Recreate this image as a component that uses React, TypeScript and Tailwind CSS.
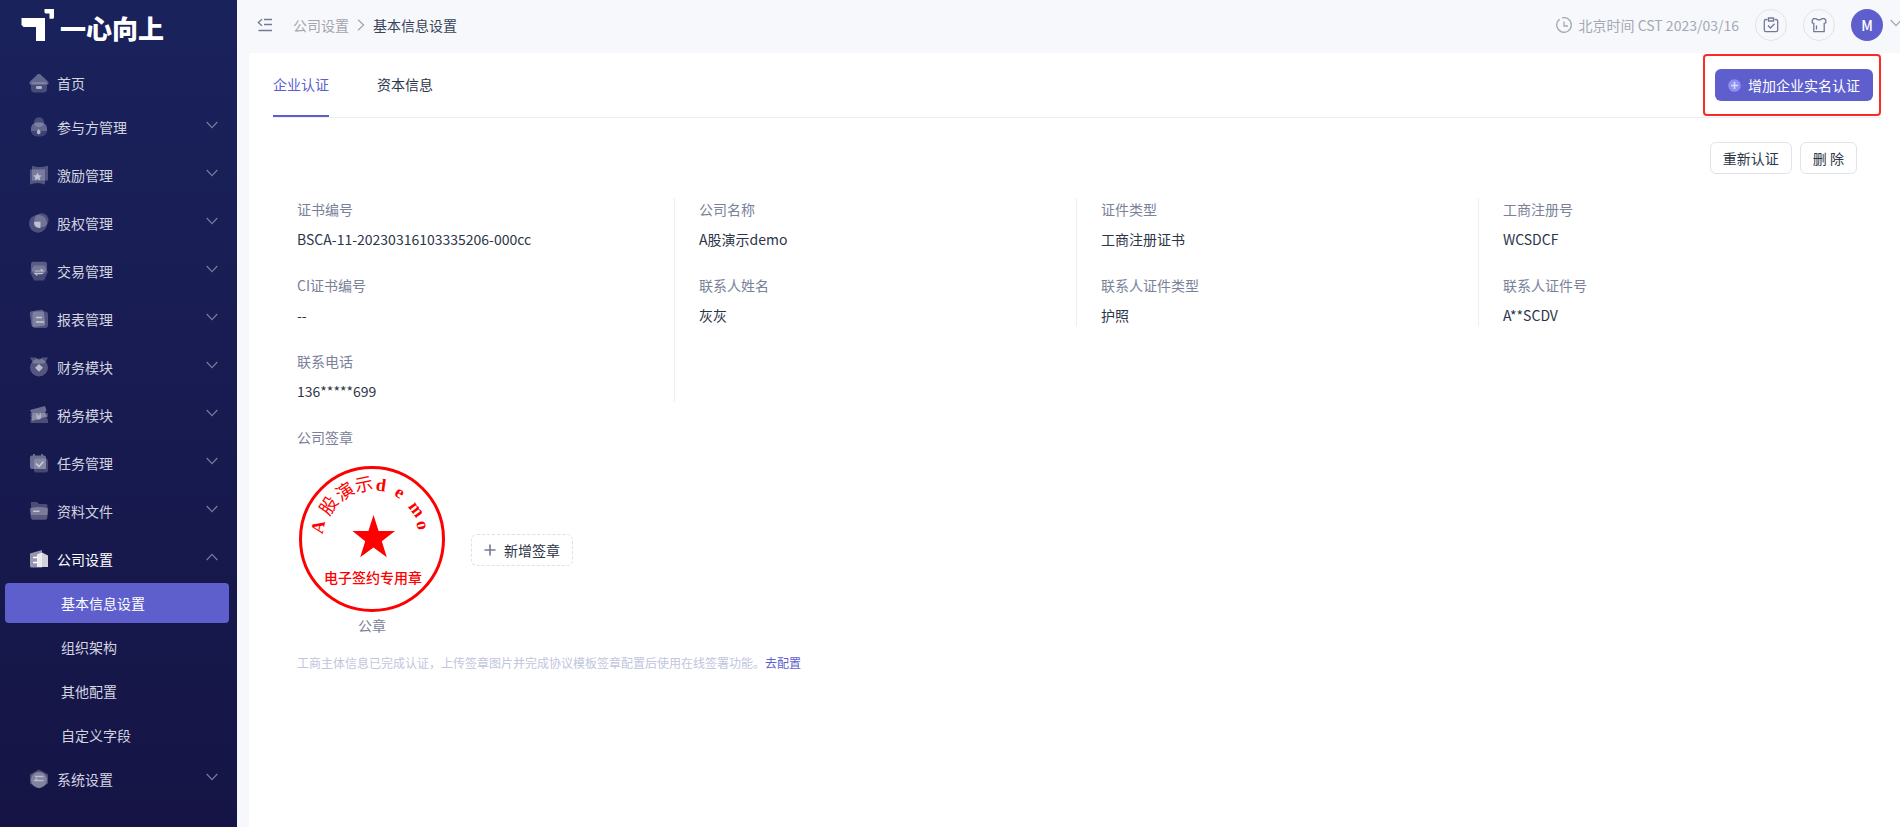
import { useState } from "react";
import type { ReactNode } from "react";
import clsx from "clsx";

const Chevron = ({ className }: { className?: string }) => (
  <svg
    className={clsx("h-2 w-3 shrink-0", className)}
    viewBox="0 0 12 8"
    fill="none"
    stroke="currentColor"
    strokeWidth="1.3"
  >
    <path d="M0.7 1 6 6.6 11.3 1" />
  </svg>
);

const icons: Record<string, ReactNode> = {
  home: (
    <>
      <rect x="2" y="9" width="16" height="10.5" rx="3.5" opacity="0.25" />
      <path d="M8.7 1.2a2 2 0 0 1 2.6 0l7.9 7.6c.7.8.3 2.7-.8 2.7H1.6c-1.1 0-1.5-1.9-.8-2.7z" opacity="0.4" />
      <rect x="7" y="13" width="6" height="3" rx="1.2" opacity="0.75" />
    </>
  ),
  party: (
    <>
      <circle cx="10" cy="5.2" r="5" opacity="0.25" />
      <rect x="2" y="5.5" width="16" height="14" rx="6" opacity="0.2" />
      <path d="M2 14v-2.5a6 6 0 0 1 6-6h4a6 6 0 0 1 6 6V14z" opacity="0.25" />
      <path d="M9.7 11.7 11.4 14.5a1.9 1.9 0 1 1-3.4 0z" opacity="0.8" />
    </>
  ),
  incentive: (
    <>
      <path d="M3 .8q7.5 2.4 16 0V15.5H3z" opacity="0.3" />
      <path d="M1 4.5h15V19.5q-7.5-3-15 0z" opacity="0.3" />
      <path d="m8.500 7.500 1.300 2.700 2.900.4-2.100 2 .5 2.900-2.600-1.400-2.600 1.400.5-2.900-2.100-2 2.900-.4z" opacity="0.8" />
    </>
  ),
  equity: (
    <>
      <circle cx="12.5" cy="7.3" r="7" opacity="0.28" />
      <circle cx="9" cy="10.7" r="9" opacity="0.28" />
      <path d="M5 8.7h6.5V15H9.8A4.8 4.8 0 0 1 5 10.2z" opacity="0.8" />
    </>
  ),
  trade: (
    <>
      <path d="M2 3Q2 .8 4 .8h12q2 0 2 2.2V8q-1 5-8 6Q3 13 2 8z" opacity="0.35" />
      <path d="M5 4.5h10l4 6.5-4 8.5H5L1 11z" opacity="0.25" />
      <path d="M6 10h8l-2.3-2M14 12.5H6l2.3 2" fill="none" stroke="currentColor" strokeWidth="1.1" opacity="0.8" />
    </>
  ),
  report: (
    <>
      <rect x="1.5" y="1.5" width="14" height="16" rx="2" transform="rotate(-8 8 9)" opacity="0.35" />
      <rect x="3.5" y="2.5" width="15.5" height="16.5" rx="3" opacity="0.3" />
      <path d="M7 8.5h6M7 13h8" stroke="currentColor" strokeWidth="1.5" opacity="0.85" />
    </>
  ),
  finance: (
    <>
      <path d="M1 .5h6l3 3 3-3h6l-3.5 6h-11z" opacity="0.3" />
      <circle cx="10" cy="10.5" r="9" opacity="0.32" />
      <path d="m10 7 4 3.700-4 4-4-4z" opacity="0.8" />
    </>
  ),
  tax: (
    <>
      <path d="M1 5 16 1l1.5 4.5-1.5 2 2 4L3 16l-.5-4 1-2.5z" opacity="0.45" />
      <path d="M1.5 8H19v3.5q-2 1.500 0 3V18H1.500v-3.500q2-1.500 0-3z" opacity="0.28" />
      <path d="M7.5 7.5 9.8 11l2.200-3.500v6l-2.200 1.500-2.300-1.500z" opacity="0.55" />
    </>
  ),
  task: (
    <>
      <rect x="5" y="5.5" width="14" height="14" rx="2" opacity="0.25" />
      <path d="M1 4.5Q1 2.500 3 2.500h1V1h2v1.500h6V1h2v1.500h1q2 0 2 2V16H3q-2 0-2-2z" opacity="0.45" />
      <path d="m7 10.5 3 3L14.5 8.5" fill="none" stroke="currentColor" strokeWidth="1.7" opacity="0.85" />
    </>
  ),
  file: (
    <>
      <path d="M2 1h6l2 2h7q1.5 0 1.5 1.5V14H2z" opacity="0.28" />
      <path d="M2 7q7-2 16 0 1.500 0 1.200 2l-1 8q-.2 1.800-2 1.800H4q-1.800 0-2-1.800L.8 9Q.5 7 2 7z" opacity="0.35" />
      <path d="M4 10.3h6.5" stroke="currentColor" strokeWidth="1.5" opacity="0.85" />
    </>
  ),
  company: (
    <>
      <path d="M1 4.5 13 1v17.5H2.5Q1 18.500 1 17z" opacity="0.55" />
      <path d="M8 5.5 13 3.500l6 3V18H8z" opacity="0.8" />
      <path d="M4 8.5h5M4 13.5h5" stroke="currentColor" strokeWidth="1.5" />
    </>
  ),
  system: (
    <>
      <path d="m10 .5 9 5v9l-9 5-9-5v-9z" opacity="0.3" />
      <circle cx="10" cy="11" r="8" opacity="0.4" />
      <path d="M6 7.5h8.5M14.5 11.500H6l2-2" fill="none" stroke="currentColor" strokeWidth="1.3" opacity="0.7" />
    </>
  ),
};

const menus = [
  { key: "party", title: "参与方管理" },
  { key: "incentive", title: "激励管理" },
  { key: "equity", title: "股权管理" },
  { key: "trade", title: "交易管理" },
  { key: "report", title: "报表管理" },
  { key: "finance", title: "财务模块" },
  { key: "tax", title: "税务模块" },
  { key: "task", title: "任务管理" },
  { key: "file", title: "资料文件" },
  {
    key: "company",
    title: "公司设置",
    children: ["基本信息设置", "组织架构", "其他配置", "自定义字段"],
  },
  { key: "system", title: "系统设置" },
];

const columns = [
  [
    ["证书编号", "BSCA-11-20230316103335206-000cc"],
    ["CI证书编号", "--"],
    ["联系电话", "136*****699"],
  ],
  [
    ["公司名称", "A股演示demo"],
    ["联系人姓名", "灰灰"],
  ],
  [
    ["证件类型", "工商注册证书"],
    ["联系人证件类型", "护照"],
  ],
  [
    ["工商注册号", "WCSDCF"],
    ["联系人证件号", "A**SCDV"],
  ],
];

const MenuIcon = ({ name }: { name: string }) => (
  <svg className="size-5 shrink-0" viewBox="0 0 20 20" fill="currentColor">
    {icons[name]}
  </svg>
);

const Sidebar = () => {
  const [opened, setOpened] = useState("company");
  const [current, setCurrent] = useState("基本信息设置");

  return (
    <aside className="w-[237px] shrink-0 bg-linear-to-b from-[#1a225c] to-[#151445] text-[#d3d4e0]">
      <div className="flex h-[63px] items-start gap-1 pt-2 pl-5">
        <svg className="h-9 w-9 shrink-0 text-white" viewBox="0 0 36 36" fill="currentColor">
          <path d="M1.5 10H25v23h-9V19H3.5l-2-2z" />
          <path d="M24.5 1H34v9l-1 .8h-3.5V5.5h-4l-1-1z" />
        </svg>
        <span className="text-[26px] leading-10 font-black text-white">一心向上</span>
      </div>
      <nav className="pb-7">
        <a href="#" className="flex h-10 items-center gap-2 pl-[29px]">
          <MenuIcon name="home" />
          首页
        </a>
        {menus.map((menu) => {
          const isOpen = opened === menu.key;
          return (
            <div key={menu.key} className="flow-root">
              <button
                onClick={() => setOpened(isOpen ? "" : menu.key)}
                className={clsx(
                  "my-1 flex h-10 w-full items-center gap-2 pr-[19px] pl-[29px]",
                  isOpen && "text-white"
                )}
              >
                <MenuIcon name={menu.key} />
                {menu.title}
                <Chevron className={clsx("mb-1 ml-auto text-[#75779c]", isOpen && "rotate-180")} />
              </button>
              {isOpen && menu.children && (
                <div className="flex flex-col gap-1 pr-2 pl-[5px]">
                  {menu.children.map((child) => (
                    <a
                      key={child}
                      href="#"
                      onClick={() => setCurrent(child)}
                      className={clsx(
                        "flex h-10 items-center rounded pl-14",
                        current === child && "bg-[#5e5fcd] text-white"
                      )}
                    >
                      {child}
                    </a>
                  ))}
                </div>
              )}
            </div>
          );
        })}
      </nav>
    </aside>
  );
};

const Header = () => (
  <header className="flex h-[53px] items-center overflow-hidden pt-2 pb-[11px] pl-5">
    <button aria-label="收起菜单" className="text-[#737a95]">
      <svg className="h-[14px] w-4" viewBox="0 0 16 14" fill="none" stroke="currentColor" strokeWidth="1.3">
        <path d="M5 1.2 1.3 4.5 5 7.8M7 1.5h8M7 6.5h8M1.5 12.5H15" />
      </svg>
    </button>
    <nav className="ml-5 flex items-center text-[#a3a6b0]">
      <a href="#">公司设置</a>
      <Chevron className="mx-[6px] -rotate-90" />
      <span className="text-[#39435a]">基本信息设置</span>
    </nav>
    <div className="ml-auto flex items-center gap-4">
      <div className="flex items-center gap-[7px] text-[#a3a8b5]">
        <svg className="size-4" viewBox="0 0 16 16" fill="none" stroke="currentColor" strokeWidth="1.3">
          <path d="M6 .9a7.3 7.3 0 1 1-3.7 2.5M1.800 4.200 3.600 2.200M8 4.500V9h4" />
        </svg>
        <span>北京时间 CST 2023/03/16</span>
      </div>
      <button
        aria-label="待办"
        className="flex size-8 items-center justify-center rounded-full border border-[#e2e2ea] text-[#737a95]"
      >
        <svg className="size-4" viewBox="0 0 16 16" fill="none" stroke="currentColor" strokeWidth="1.3">
          <path d="M4.5 2.5H3A1.7 1.7 0 0 0 1.3 4.2V13A1.7 1.7 0 0 0 3 14.7h10a1.7 1.7 0 0 0 1.7-1.7V4.2A1.7 1.7 0 0 0 13 2.5h-1.5" />
          <path d="M5.5 1h5v3h-5zM5 8.5l2.5 2.5 4-4.3" />
        </svg>
      </button>
      <button
        aria-label="换肤"
        className="flex size-8 items-center justify-center rounded-full border border-[#e2e2ea] text-[#737a95]"
      >
        <svg className="size-4" viewBox="0 0 16 16" fill="none" stroke="currentColor" strokeWidth="1.3">
          <path d="M5 1.7Q8 4.3 11 1.7h2.5l1.3 1.5v2.6l-1.6.7v8.2H2.8V6.5l-1.6-.7V3.2l1.3-1.5z" />
          <path d="M5.5 8.5v4" />
        </svg>
      </button>
      <button className="flex items-center gap-[7px] text-[#a3a6b0]">
        <span className="flex size-8 items-center justify-center rounded-full bg-[#5e5fcd] font-medium text-white">
          M
        </span>
        <Chevron className="-mr-[2px] mb-1" />
      </button>
    </div>
  </header>
);

const sealText = [
  { char: "A", x: 21, y: 63, rotate: -78 },
  { char: "股", x: 32, y: 42, rotate: -56 },
  { char: "演", x: 48, y: 28, rotate: -34 },
  { char: "示", x: 67, y: 21, rotate: -11 },
  { char: "d", x: 84, y: 21, rotate: 8 },
  { char: "e", x: 103, y: 28, rotate: 32 },
  { char: "m", x: 120, y: 45, rotate: 54 },
  { char: "o", x: 126, y: 61, rotate: 76 },
];

const Seal = () => (
  <svg
    className="size-[150px] font-['Liberation_Serif','Noto_Sans_CJK_SC',serif]"
    viewBox="0 0 150 150"
    fill="#fe0000"
    textAnchor="middle"
  >
    <circle cx="75" cy="75" r="71.5" fill="none" stroke="#fe0000" strokeWidth="3" />
    {sealText.map((item) => (
      <text
        key={item.char}
        transform={`translate(${item.x} ${item.y}) rotate(${item.rotate})`}
        y="6"
        fontSize="18"
        fontWeight={/[a-z]/i.test(item.char) ? 700 : 400}
      >
        {item.char}
      </text>
    ))}
    <path d="M76.5 51 81.6 67.1H98L84.8 77.2 89.8 93.3 76.5 83.4 63.2 93.3 68.2 77.2 55.5 67.1H71.4z" />
    <text x="76" y="119" fontSize="14" fontWeight="500">
      电子签约专用章
    </text>
  </svg>
);

const tabs = ["企业认证", "资本信息"];

export default function App() {
  const [tab, setTab] = useState("企业认证");

  return (
    <div className="flex min-h-screen bg-[#f7f8fc] font-['Noto_Sans_CJK_SC',sans-serif] text-sm leading-[22px] text-[#2c3547]">
      <Sidebar />
      <div className="flex min-w-0 flex-1 flex-col">
        <Header />
        <main className="ml-3 flex-1 bg-white pr-[19px] pl-6">
          <div className="relative flex h-[65px] gap-12 border-b border-[#eeeef2]">
            {tabs.map((item) => (
              <button
                key={item}
                onClick={() => setTab(item)}
                className={clsx(
                  "h-16 border-b-2",
                  tab === item ? "border-[#5e5fcd] text-[#5e5fcd]" : "border-transparent"
                )}
              >
                {item}
              </button>
            ))}
            <button className="mt-4 mr-2 ml-auto flex h-8 items-center gap-[7px] rounded-md bg-[#5e5fcd] px-[13px] text-white">
              <svg className="size-[13px]" viewBox="0 0 13 13">
                <circle cx="6.5" cy="6.5" r="6.3" fill="#8e8ff0" />
                <path d="M6.5 3v7M3 6.5h7" stroke="#d9d9fb" strokeWidth="1.6" />
              </svg>
              增加企业实名认证
            </button>
            <div className="pointer-events-none absolute top-px right-0 h-[62px] w-[178px] rounded border-2 border-[#fb2a22]" />
          </div>

          <div className="mt-6 mr-6 flex justify-end gap-2">
            <button className="h-8 rounded-md border border-[#e2e2ec] px-3">重新认证</button>
            <button className="h-8 rounded-md border border-[#e2e2ec] px-3">删 除</button>
          </div>

          <div className="mt-6 grid grid-cols-4 items-start">
            {columns.map((column, index) => (
              <dl
                key={index}
                className={clsx(
                  "flex flex-col gap-6 pl-6",
                  index < columns.length - 1 && "border-r border-[#ededf2]"
                )}
              >
                {column.map(([label, value]) => (
                  <div key={label} className="flex flex-col gap-2">
                    <dt className="text-[#7a8199]">{label}</dt>
                    <dd>{value}</dd>
                  </div>
                ))}
              </dl>
            ))}
          </div>

          <section className="mt-6 pl-6">
            <h2 className="text-[#7a8199]">公司签章</h2>
            <div className="mt-4 flex items-center gap-6">
              <figure className="flex flex-col items-center">
                <Seal />
                <figcaption className="text-[#7a8199]">公章</figcaption>
              </figure>
              <button className="flex h-8 items-center gap-2 rounded-md border border-dashed border-[#dfdfea] px-3">
                <svg className="size-3 text-[#737a95]" viewBox="0 0 12 12" stroke="currentColor" strokeWidth="1.6">
                  <path d="M6 .5v11M.5 6h11" />
                </svg>
                新增签章
              </button>
            </div>
            <p className="mt-4 text-xs leading-[22px] text-[#c0c6dc]">
              工商主体信息已完成认证，上传签章图片并完成协议模板签章配置后使用在线签署功能。
              <a href="#" className="text-[#5e5fcd]">
                去配置
              </a>
            </p>
          </section>
        </main>
      </div>
    </div>
  );
}
